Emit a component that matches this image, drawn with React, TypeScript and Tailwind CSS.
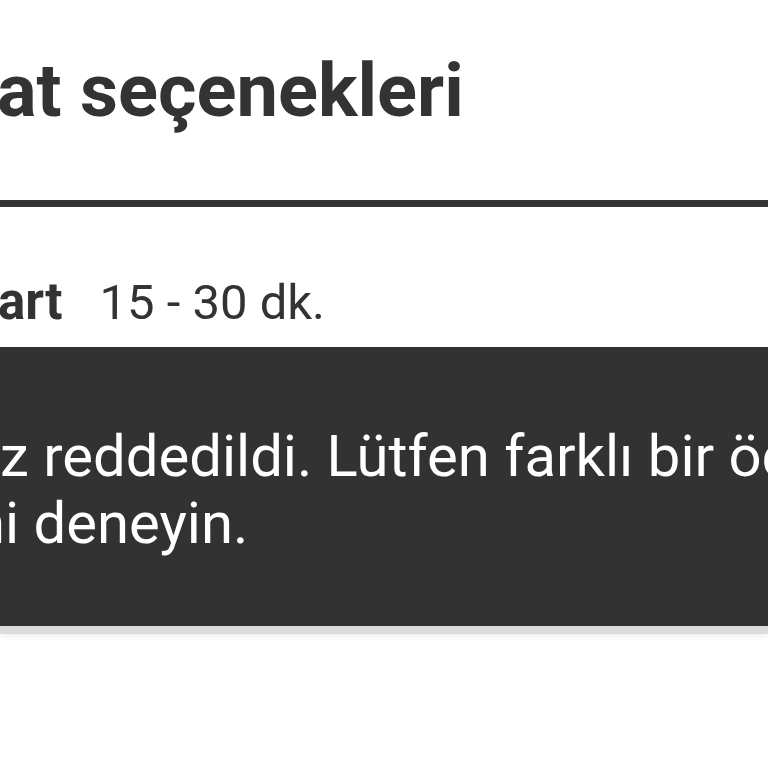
export default function App() {
  return (
    <div className="w-[768px] h-[768px] overflow-hidden bg-white text-[#333333] font-['Roboto',sans-serif]">
      <h1 className="pt-[45px] ml-[-3px] text-[74px] leading-[92px] font-bold whitespace-nowrap">
        at seçenekleri
      </h1>

      <div className="mt-[63px] h-[7px] bg-[#333333]" />

      <div className="mt-[64px] flex items-baseline whitespace-nowrap text-[49px] leading-[61px]">
        <span className="ml-[-2px] text-[51px] font-bold">art</span>
        <span className="ml-[37px]">15 - 30 dk.</span>
      </div>

      <div className="mt-[14px] h-[279px] bg-[#323232] text-white text-[58px] leading-[67px] pt-[76px] shadow-[0_8px_0_#dcdcdc,0_11px_4px_rgba(0,0,0,0.06)]">
        <p className="whitespace-nowrap">z reddedildi. Lütfen farklı bir ödeme</p>
        <p className="ml-[-27px] whitespace-nowrap">ni deneyin.</p>
      </div>
    </div>
  );
}
